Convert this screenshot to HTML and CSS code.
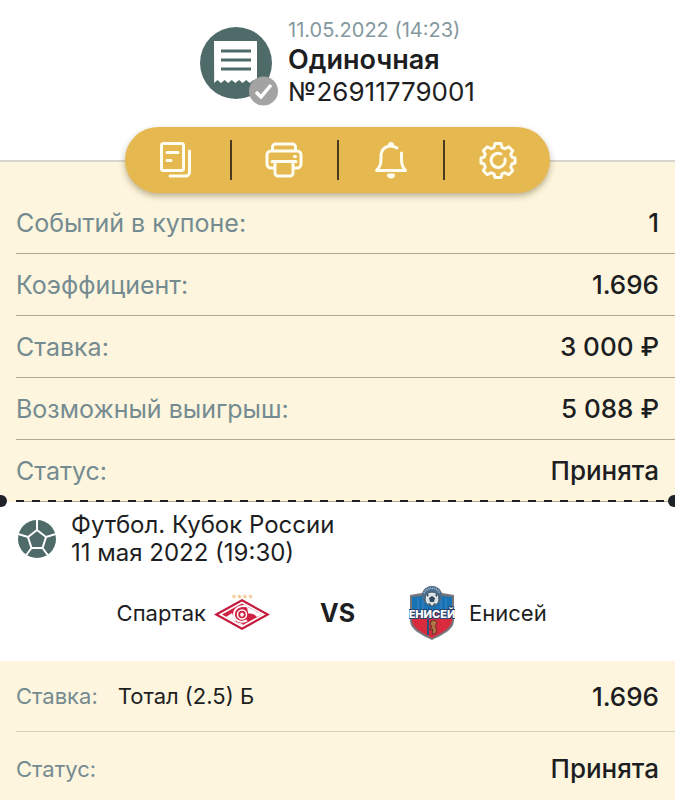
FILE: index.html
```html
<!DOCTYPE html>
<html lang="ru">
<head>
    <meta charset="UTF-8">
    <meta name="viewport" content="width=device-width, initial-scale=1.0">
    <title>Купон №26911779001</title>
    <link rel="stylesheet" href="styles.css">
</head>
<body>
    <header class="header">
        <div class="coupon-icon">
            <svg viewBox="0 0 80 80" aria-hidden="true">
                <circle cx="36" cy="36" r="36" fill="#4f6b69"/>
                <path d="M14 14H57V56l-3.6-3-3.6 3-3.6-3-3.6 3-3.6-3-3.6 3-3.6-3-3.6 3-3.6-3-3.6 3-3.6-3-3.2 3z" fill="#fff"/>
                <path d="M21 24H51M21 33H51M21 42H51" stroke="#4f6b69" stroke-width="3"/>
                <circle cx="63.5" cy="64" r="14.5" fill="#a3a3a3"/>
                <path d="M56 65l5 5 10-12" fill="none" stroke="#fff" stroke-width="3.5"/>
            </svg>
        </div>
        <div class="coupon-title">
            <time class="coupon-date">11.05.2022 (14:23)</time>
            <h1 class="coupon-type">Одиночная</h1>
            <div class="coupon-number">№26911779001</div>
        </div>
        <nav class="toolbar">
            <button type="button" class="tool" aria-label="Копировать">
                <svg viewBox="0 0 36 36" aria-hidden="true">
                    <rect x="2.5" y="1.5" width="22" height="27" rx="2"/>
                    <path d="M8 10.5h11M8 18.5h4M30.5 9v21a4 4 0 0 1-4 4H11"/>
                </svg>
            </button>
            <button type="button" class="tool" aria-label="Печать">
                <svg viewBox="0 0 36 36" aria-hidden="true">
                    <path d="M6.5 9V5a3 3 0 0 1 3-3h17a3 3 0 0 1 3 3v4M8 26H5a4 4 0 0 1-4-4v-9a4 4 0 0 1 4-4h26a4 4 0 0 1 4 4v9a4 4 0 0 1-4 4h-3M6 19.5h24"/>
                    <path d="M9 20v11a3 3 0 0 0 3 3h12a3 3 0 0 0 3-3V20M28.5 14.5h1"/>
                </svg>
            </button>
            <button type="button" class="tool" aria-label="Уведомления">
                <svg viewBox="0 0 36 36" aria-hidden="true">
                    <path d="M24 6C16 1 8 6 8 14c0 7 0 10-4.5 14.500h29C28 24 28.500 19 28.500 11"/>
                    <path d="M16.5 3a1.5 1.5 0 0 1 3 0M15.500 33a2.5 2 0 0 0 5 0z"/>
                </svg>
            </button>
            <button type="button" class="tool" aria-label="Настройки">
                <svg viewBox="0 0 36 36" aria-hidden="true">
                    <path d="M15 1.500h6l1 4 3 1.200 3.700-2 4 4-2 3.600 1.200 3 3.100.7v5l-3.100 1-1.200 3 2 3.700-4 4-3.700-2-3 1.300-1 3.500h-6l-1-3.500-3-1.300-3.700 2-4-4 2-3.700-1.200-3-3.100-1v-5l3.100-.7 1.200-3-2-3.600 4-4 3.700 2 3-1.200z"/>
                    <path d="M21 12A7 7 0 1 0 25 17"/>
                </svg>
            </button>
        </nav>
    </header>

    <main>
        <dl class="summary">
            <div class="row"><dt>Событий в купоне:</dt><dd>1</dd></div>
            <div class="row"><dt>Коэффициент:</dt><dd>1.696</dd></div>
            <div class="row"><dt>Ставка:</dt><dd>3 000 ₽</dd></div>
            <div class="row"><dt>Возможный выигрыш:</dt><dd>5 088 ₽</dd></div>
            <div class="row"><dt>Статус:</dt><dd>Принята</dd></div>
        </dl>

        <section class="event">
            <div class="event-head">
                <svg class="ball" viewBox="0 0 38 38" aria-hidden="true">
                    <circle cx="19" cy="19" r="19" fill="#4f6b69"/>
                    <path d="M19 10l9 7-3.500 11h-11L10 17zM19 10V0M28 17l10-3M24.500 28l6 8M13.500 28l-6 8M10 17L0 14" fill="none" stroke="#fff" stroke-width="2"/>
                </svg>
                <div class="event-name">
                    <div>Футбол. Кубок России</div>
                    <time>11 мая 2022 (19:30)</time>
                </div>
            </div>
            <div class="teams">
                <div class="team team-home">
                    <span>Спартак</span>
                    <svg class="logo-home" viewBox="0 0 56 40" aria-hidden="true">
                        <path d="M20 1l.8 1.500 1.700.3-1.200 1.200.2 1.600L20 5l-1.500.6.2-1.600-1.200-1.200 1.700-.3zM25.500 1l.8 1.500 1.700.3-1.200 1.200.2 1.600-1.500-.6-1.500.6.2-1.600-1.200-1.200 1.700-.3zM31 1l.8 1.500 1.700.3-1.200 1.200.2 1.600L31 5l-1.500.6.2-1.600-1.200-1.200 1.700-.3zM36.500 1l.8 1.500 1.700.3-1.200 1.200.2 1.600-1.500-.6-1.500.6.2-1.600-1.200-1.200 1.700-.3z" fill="#f0cf9c"/>
                        <path d="M28 6L56 21.500 28 37 0 21.500z" fill="#c5193b"/>
                        <path d="M28 8.500L51.500 21.500 28 34.500 4.500 21.500z" fill="#fff"/>
                        <path d="M28 10.500L48 21.500 28 32.500 8 21.500z" fill="#cf2141"/>
                        <!-- белая лента -->
                        <path d="M12 24l6-4 4 9 7 2-1 1.500zM33 13.500l15 8-5 2.500c-4-5-7-2-9-4z" fill="#fff"/>
                        <path d="M34 13.500c-8-2-14 2-14 8s6 9 13 6" fill="none" stroke="#fff" stroke-width="2"/>
                        <circle cx="28" cy="21.500" r="6" fill="#cf2141"/>
                        <circle cx="28" cy="21.500" r="4.500" fill="none" stroke="#fff" stroke-width="1.500"/>
                        <path d="M28 19.500l2 1.500-.8 2.500h-2.400L26 21z" fill="#fff"/>
                    </svg>
                </div>
                <strong class="versus">VS</strong>
                <div class="team team-away">
                    <svg class="logo-away" viewBox="0 0 46 56" aria-hidden="true">
                        <path d="M1 10l12-2C15 3 19 1 23 1s8 2 10 7l12 2v25c0 10-12 15-22 20C13 50 1 45 1 35z" fill="#77757a"/>
                        <path d="M3 12l11-1c3-1 15-1 18 0l11 1v16H3z" fill="#1873b5"/>
                        <path d="M9 13v14M14 12v15M32 12v15M37 13v14" stroke="#3c87c0"/>
                        <path d="M3 28h40v7c0 8-11 13-20 18C14 48 3 43 3 35z" fill="#d92b3e"/>
                        <circle cx="23" cy="11" r="10" fill="#4b6d8e"/>
                        <path d="M15 8a9 9 0 0 1 16 0" fill="none" stroke="#a5bacb" stroke-width="2" stroke-dasharray="1 1"/>
                        <circle cx="23" cy="14" r="7" fill="#dce3e8" stroke="#42535f"/>
                        <path d="M23 11l3 2-1 4h-4l-1-4zM18 9l2 1-2 2zM28 9l-2 1 2 2zM19 18l3 1-1 2zM27 18l-3 1 1 2z" fill="#34495a"/>
                        <path d="M19 34v16" stroke="#27517e" stroke-width="2"/>
                        <path d="M22 36l4-1 2 3-2 3 2 4-2 4h-3l1-5-3 1 2-4-2-1z" fill="#b37645" stroke="#682d2c"/>
                        <text x="23" y="33" text-anchor="middle" class="crest-text">ЕНИСЕЙ</text>
                    </svg>
                    <span>Енисей</span>
                </div>
            </div>
        </section>

        <dl class="bet">
            <div class="row"><dt>Ставка:</dt><dd class="bet-name">Тотал (2.5) Б</dd><dd>1.696</dd></div>
            <div class="row"><dt>Статус:</dt><dd>Принята</dd></div>
        </dl>
    </main>
</body>
</html>
```
FILE: styles.css
```css
* {
    box-sizing: border-box;
}
body {
    margin: 0;
    background-color: #fff;
    color: #1d1e22;
    font-family: Inter, "Liberation Sans", sans-serif;
}
.header {
    position: relative;
    display: flex;
    justify-content: center;
    gap: 8px;
    padding: 16px 16px 52px;
    border-bottom: 2px solid #d8d5cc;
}
.coupon-icon {
    width: 80px;
    padding-top: 11px;
}
.coupon-icon svg {
    display: block;
    width: 80px;
    height: 80px;
}
.coupon-date {
    display: block;
    color: #84989e;
    font-size: 20px;
    line-height: 28px;
}
.coupon-type {
    margin: 0;
    font-size: 27px;
    font-weight: 600;
    line-height: 32px;
}
.coupon-number {
    font-size: 26px;
    line-height: 32px;
}
/* панель лежит на границе шапки */
.toolbar {
    position: absolute;
    right: 0;
    bottom: -33px;
    left: 0;
    z-index: 2;
    display: flex;
    width: 63%;
    height: 66px;
    margin: 0 auto;
    padding: 13px 0;
    border-radius: 33px;
    background-color: #e5b850;
    box-shadow: 0 3px 6px rgba(90, 70, 20, 0.4);
}
.tool {
    display: flex;
    flex: 1;
    align-items: center;
    justify-content: center;
    padding: 0;
    border: none;
    background: none;
    cursor: pointer;
}
.tool + .tool {
    border-left: 2px solid #49391e;
}
.tool svg {
    width: 36px;
    height: 36px;
    overflow: visible;
    fill: none;
    stroke: #fffdf0;
    stroke-width: 3;
    stroke-linecap: round;
    stroke-linejoin: round;
}
.summary,
.bet {
    margin: 0;
    padding-left: 16px;
    background-color: #fdf5dd;
}
.summary {
    position: relative;
    padding-top: 30px;
}
.row {
    display: flex;
    align-items: center;
    height: 62px;
    padding-right: 16px;
    border-bottom: 1px solid #b5a78b;
}
.row dt {
    color: #748b91;
    font-size: 25px;
}
.row dd {
    margin: 0 0 0 auto;
    font-size: 26px;
    font-weight: 500;
}
/* линия отрыва */
.summary .row:last-child::after {
    content: "";
    position: absolute;
    right: 10px;
    bottom: 0;
    left: 16px;
    height: 2px;
    background: repeating-linear-gradient(to right, #1e2128 0 8px, transparent 8px 16px);
}
.summary::before,
.summary::after {
    content: "";
    position: absolute;
    bottom: -5px;
    z-index: 1;
    width: 7px;
    height: 12px;
    background-color: #1e2128;
}
.summary::before {
    left: 0;
    border-radius: 0 6px 6px 0;
}
.summary::after {
    right: 0;
    border-radius: 6px 0 0 6px;
}
.event {
    padding: 9px 16px 20px;
}
.event-head {
    display: flex;
    align-items: center;
    gap: 15px;
    font-size: 24px;
    line-height: 28px;
}
.ball {
    width: 38px;
    height: 38px;
    margin-left: 2px;
}
.teams {
    display: grid;
    grid-template-columns: 1fr auto 1fr;
    align-items: center;
    gap: 50px;
    margin-top: 18px;
    font-size: 22px;
}
.team {
    display: flex;
    align-items: center;
    gap: 14px;
}
.team-home {
    justify-content: flex-end;
    gap: 8px;
}
.team-away {
    padding-left: 4px;
}
.logo-home {
    width: 56px;
    height: 40px;
}
.logo-away {
    width: 46px;
    height: 56px;
}
.crest-text {
    fill: #fff;
    stroke: #2b466f;
    stroke-width: 2px;
    paint-order: stroke;
    font-size: 11px;
    font-weight: 800;
}
.versus {
    font-size: 25px;
    font-weight: 700;
}
.bet .row {
    height: 71px;
    border-color: #d6cfba;
}
.bet .row:last-child {
    height: 73px;
    border-bottom: none;
}
.bet dt {
    font-size: 22px;
}
.bet .bet-name {
    margin-left: 20px;
    font-size: 22px;
    font-weight: 400;
}
```
